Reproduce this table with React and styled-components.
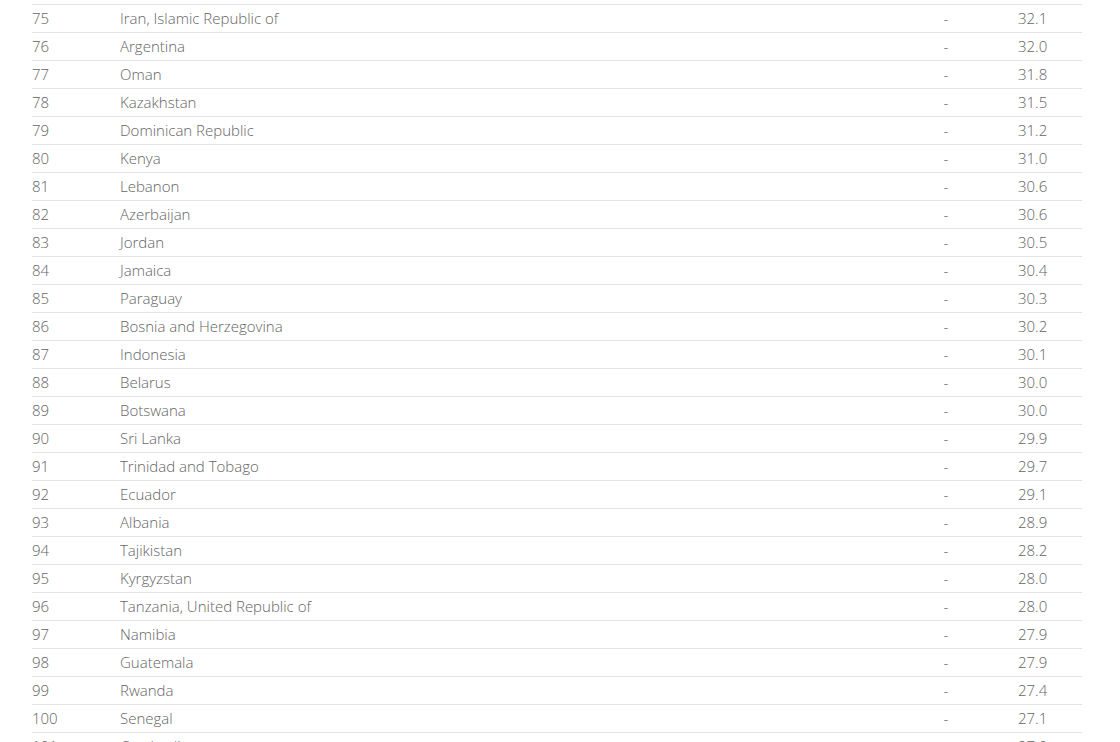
import React from 'react';
import styled, { createGlobalStyle } from 'styled-components';

const GlobalStyle = createGlobalStyle`
  html, body {
    margin: 0;
    padding: 0;
    background: #fff;
    overflow: hidden;
  }
  body {
    font-family: "Open Sans", "DejaVu Sans", sans-serif;
  }
`;

const Page = styled.main`
  padding: 4px 0 0 32px;
  height: 742px;
  box-sizing: border-box;
  overflow: hidden;
`;

const Table = styled.div`
  width: 1050px;
  display: flex;
  flex-direction: column;
`;

const Row = styled.div`
  display: grid;
  grid-template-columns: 88px 1fr 80px 96px;
  align-items: center;
  height: 28px;
  box-sizing: border-box;
  border-top: 1px solid #e2e2e2;
  font-size: 15px;
  font-weight: 300;
  color: #646464;
`;

const Cell = styled.span`
  white-space: nowrap;
  text-align: ${(p) => p.$align || 'left'};
  padding-left: ${(p) => p.$indent || 0}px;
  margin-top: -1px;
`;

const data = [
  [75, 'Iran, Islamic Republic of', '32.1'],
  [76, 'Argentina', '32.0'],
  [77, 'Oman', '31.8'],
  [78, 'Kazakhstan', '31.5'],
  [79, 'Dominican Republic', '31.2'],
  [80, 'Kenya', '31.0'],
  [81, 'Lebanon', '30.6'],
  [82, 'Azerbaijan', '30.6'],
  [83, 'Jordan', '30.5'],
  [84, 'Jamaica', '30.4'],
  [85, 'Paraguay', '30.3'],
  [86, 'Bosnia and Herzegovina', '30.2'],
  [87, 'Indonesia', '30.1'],
  [88, 'Belarus', '30.0'],
  [89, 'Botswana', '30.0'],
  [90, 'Sri Lanka', '29.9'],
  [91, 'Trinidad and Tobago', '29.7'],
  [92, 'Ecuador', '29.1'],
  [93, 'Albania', '28.9'],
  [94, 'Tajikistan', '28.2'],
  [95, 'Kyrgyzstan', '28.0'],
  [96, 'Tanzania, United Republic of', '28.0'],
  [97, 'Namibia', '27.9'],
  [98, 'Guatemala', '27.9'],
  [99, 'Rwanda', '27.4'],
  [100, 'Senegal', '27.1'],
  [101, 'Cambodia', '27.0'],
];

export default function App() {
  return (
    <>
      <GlobalStyle />
      <Page>
        <Table>
          {data.map(([rank, country, value]) => (
            <Row key={rank}>
              <Cell>{rank}</Cell>
              <Cell>{country}</Cell>
              <Cell $align="center">-</Cell>
              <Cell $indent={32}>{value}</Cell>
            </Row>
          ))}
        </Table>
      </Page>
    </>
  );
}
